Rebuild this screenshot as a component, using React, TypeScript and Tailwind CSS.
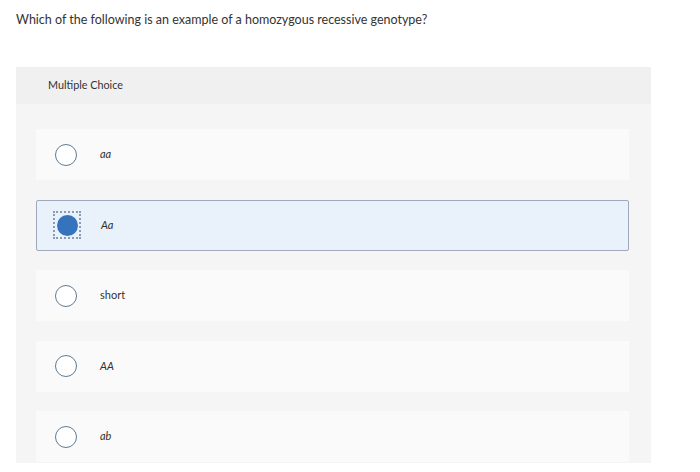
import React from "react";

const options = [
  { label: "aa", italic: true },
  { label: "Aa", italic: true },
  { label: "short", italic: false },
  { label: "AA", italic: true },
  { label: "ab", italic: true },
];

const selected = 1;

export default function App() {
  return (
    <div className="w-[700px] h-[472px] bg-white overflow-hidden text-[#333] font-['Lato','Open_Sans',sans-serif]">
      {/* Question */}
      <p className="pl-4 pt-[11px] text-[12.5px] leading-[17px] text-[#333]">
        Which of the following is an example of a homozygous recessive genotype?
      </p>

      {/* Panel */}
      <div className="mt-[39px] ml-4 w-[635px] bg-[#f5f5f5]">
        <div className="h-[37px] bg-[#f0f0f0] flex items-center pl-8">
          <span className="text-[10.8px] text-[#333]">Multiple Choice</span>
        </div>

        <div className="pl-5 pr-[22px] pt-[25px] pb-[1px] flex flex-col gap-[19.5px]">
          {options.map((o, i) => {
            const isSel = i === selected;
            return (
              <div
                key={o.label}
                className={`h-[51px] flex items-center ${
                  isSel ? "bg-[#e9f1fb] border border-[#9eaabb] rounded-[2px]" : "bg-[#fafafa]"
                }`}
              >
                <div className="w-[60px] flex justify-center">
                  {isSel ? (
                    <div className="w-[28px] h-[28px] border-2 border-dotted border-[#8a9bb5] flex items-center justify-center">
                      <div className="w-[21px] h-[21px] rounded-full bg-[#3574bd]" />
                    </div>
                  ) : (
                    <div className="w-[22px] h-[22px] rounded-full border-[1.5px] border-[#5f7b93] bg-white" />
                  )}
                </div>
                <span className={`ml-1 text-[11px] text-[#333] ${o.italic ? "italic" : ""}`}>{o.label}</span>
              </div>
            );
          })}
        </div>
      </div>
    </div>
  );
}
